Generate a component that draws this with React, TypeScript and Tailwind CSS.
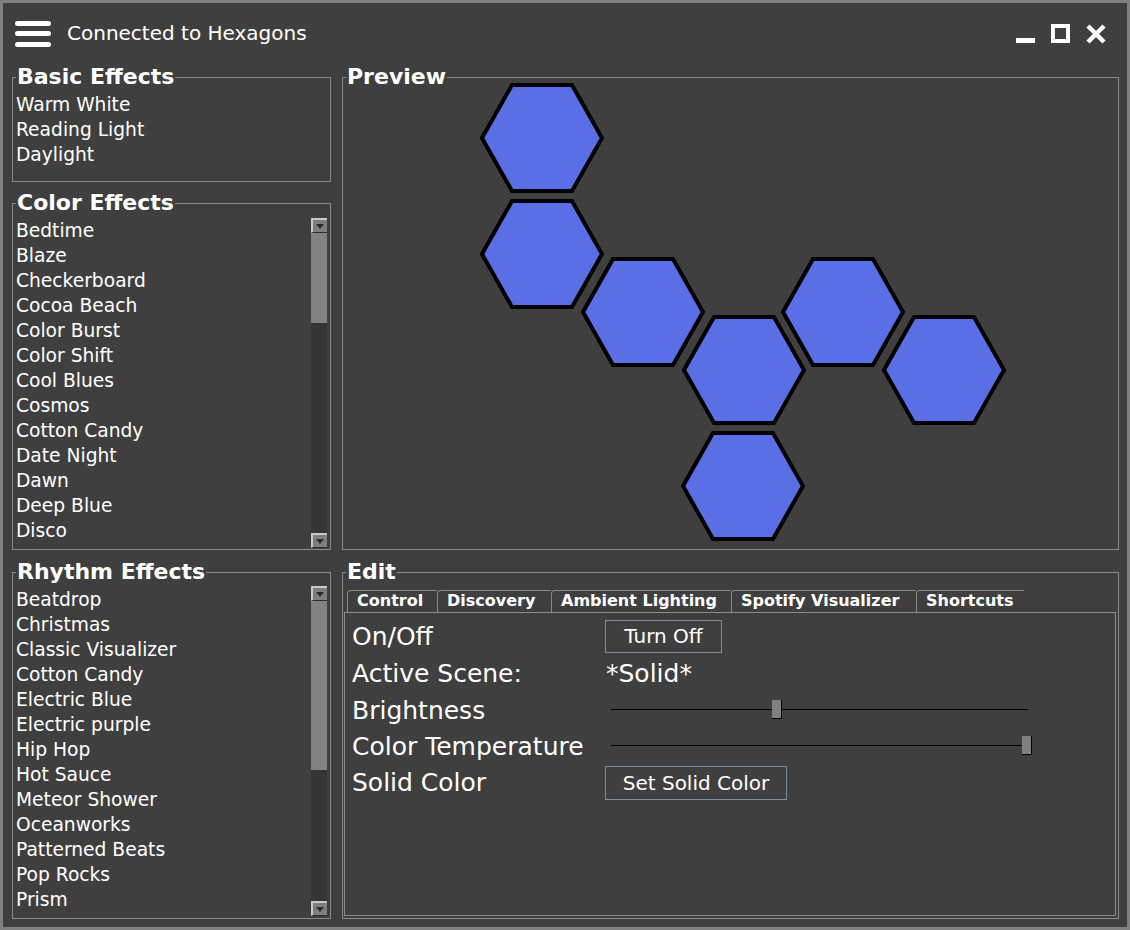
import React from "react";

const basicEffects = ["Warm White", "Reading Light", "Daylight"];
const colorEffects = [
  "Bedtime",
  "Blaze",
  "Checkerboard",
  "Cocoa Beach",
  "Color Burst",
  "Color Shift",
  "Cool Blues",
  "Cosmos",
  "Cotton Candy",
  "Date Night",
  "Dawn",
  "Deep Blue",
  "Disco",
];
const rhythmEffects = [
  "Beatdrop",
  "Christmas",
  "Classic Visualizer",
  "Cotton Candy",
  "Electric Blue",
  "Electric purple",
  "Hip Hop",
  "Hot Sauce",
  "Meteor Shower",
  "Oceanworks",
  "Patterned Beats",
  "Pop Rocks",
  "Prism",
];
const tabs = [
  { label: "Control", w: "w-[90px]" },
  { label: "Discovery", w: "w-[114px]" },
  { label: "Ambient Lighting", w: "w-[180px]" },
  { label: "Spotify Visualizer", w: "w-[185px]" },
  { label: "Shortcuts", w: "w-[108px]" },
];

// panel centres, relative to the preview canvas
const panels = [
  [199, 60],
  [199, 176],
  [300, 234],
  [401, 292],
  [500, 234],
  [601, 292],
  [400, 408],
];

const hexPoints = (cx: number, cy: number) => {
  const r = 60;
  const h = 53;
  return [
    [cx - r, cy],
    [cx - r / 2, cy - h],
    [cx + r / 2, cy - h],
    [cx + r, cy],
    [cx + r / 2, cy + h],
    [cx - r / 2, cy + h],
  ]
    .map((p) => p.join(","))
    .join(" ");
};

const Group = ({ title, className, children }: { title: string; className: string; children?: React.ReactNode }) => (
  <div className={`relative border border-[#8a8a8a] ${className}`}>
    <span className="absolute left-[3px] top-[-13px] bg-[#3f3f3f] px-[1px] text-[22px] font-bold leading-[24px] text-white">
      {title}
    </span>
    {children}
  </div>
);

const ArrowButton = () => (
  <div className="flex h-[15px] w-[16px] items-center justify-center border-t-2 border-l-2 border-b border-t-[#c8c8c8] border-l-[#c8c8c8] border-b-[#2e2e2e] bg-[#7f7f7f]">
    <svg width="8" height="5" viewBox="0 0 8 5">
      <path d="M0 0 H8 L4 5 Z" fill="#2b2b2b" />
    </svg>
  </div>
);

const Scrollbar = ({ spacer, thumb, className }: { spacer: string; thumb: string; className: string }) => (
  <div className={`flex w-[16px] shrink-0 flex-col bg-[#353535] ${className}`}>
    <ArrowButton />
    <div className="flex flex-1 flex-col">
      <div className={spacer} />
      <div className={`bg-[#828282] ${thumb}`} />
    </div>
    <ArrowButton />
  </div>
);

const ListBox = ({ items }: { items: string[] }) => (
  <div className="min-w-0 flex-1 overflow-hidden pl-[3px] pt-[14px]">
    {items.map((item) => (
      <div key={item} className="h-[25px] whitespace-nowrap text-[18.67px] leading-[25px]">
        {item}
      </div>
    ))}
  </div>
);

const Slider = ({ thumb }: { thumb: string }) => (
  <div className="relative ml-[6px] mt-[-3px] h-[1px] w-[417px] bg-black">
    <div className={`absolute h-[19px] w-[10px] border-r border-b border-black bg-[#808080] ${thumb}`} />
  </div>
);

export default function App() {
  return (
    <div className="h-[930px] w-[1130px] bg-[#808080] p-[3px] font-['DejaVu_Sans',sans-serif] text-white">
      <div className="flex h-full flex-col bg-[#3f3f3f]">
        {/* Title bar */}
        <div className="flex h-[62px] items-center pl-[12px] pr-[21px]">
          <svg width="36" height="26" viewBox="0 0 36 26">
            <rect x="0" y="0" width="36" height="5" rx="2.5" fill="#fff" />
            <rect x="0" y="10" width="36" height="5" rx="2.5" fill="#fff" />
            <rect x="0" y="21" width="36" height="5" rx="2.5" fill="#fff" />
          </svg>
          <span className="mb-[2px] ml-[16px] text-[20px] leading-[24px]">Connected to Hexagons</span>
          <svg className="ml-auto" width="90" height="20" viewBox="0 0 90 20">
            <rect x="0" y="14" width="19" height="5" fill="#fff" />
            <rect x="37" y="2" width="15" height="15" fill="none" stroke="#fff" strokeWidth="4" />
            <path d="M72 2 L88 18 M88 2 L72 18" stroke="#fff" strokeWidth="4.5" />
          </svg>
        </div>

        <div className="flex gap-[11px] pl-[9px] pt-[12px]">
          {/* Left column */}
          <div className="flex w-[319px] flex-col">
            <Group title="Basic Effects" className="h-[105px]">
              <ListBox items={basicEffects} />
            </Group>
            <Group title="Color Effects" className="mt-[21px] flex h-[347px]">
              <ListBox items={colorEffects} />
              <Scrollbar className="mb-[1px] mr-[3px] mt-[14px]" spacer="h-[0px]" thumb="h-[90px]" />
            </Group>
            <Group title="Rhythm Effects" className="mt-[22px] flex h-[347px]">
              <ListBox items={rhythmEffects} />
              <Scrollbar className="mb-[2px] mr-[3px] mt-[13px]" spacer="h-[0px]" thumb="h-[169px]" />
            </Group>
          </div>

          {/* Right column */}
          <div className="flex w-[777px] flex-col">
            <Group title="Preview" className="h-[473px]">
              <svg className="h-full w-full" viewBox="0 0 775 471">
                {panels.map(([x, y]) => (
                  <polygon key={`${x}-${y}`} points={hexPoints(x, y)} fill="#5a6fe6" stroke="#000" strokeWidth="4" strokeLinejoin="miter" />
                ))}
              </svg>
            </Group>
            <Group title="Edit" className="mt-[22px] flex h-[347px] flex-col">
              <div className="flex pl-[4px] pt-[17px]">
                {tabs.map((t) => (
                  <div
                    key={t.label}
                    className={`h-[22px] rounded-tl-[4px] border-t border-l border-[#8a8a8a] pl-[9px] text-[16px] font-bold leading-[20px] ${t.w}`}
                  >
                    {t.label}
                  </div>
                ))}
              </div>
              <div className="mb-[2px] ml-[1px] mr-[2px] flex-1 border border-[#8a8a8a] pl-[7px] pt-[6px]">
                <div className="grid grid-cols-[253px_1fr] text-[25px] leading-[30px]">
                  <div className="flex h-[36px] items-center">On/Off</div>
                  <div className="flex h-[36px] items-center">
                    <button className="mt-[-2px] h-[33px] w-[117px] border border-[#7e8c9c] text-[20px] leading-[24px] text-white">
                      Turn Off
                    </button>
                  </div>
                  <div className="flex h-[38px] items-center">Active Scene:</div>
                  <div className="flex h-[38px] items-center pl-[1px]">*Solid*</div>
                  <div className="flex h-[36px] items-center">Brightness</div>
                  <div className="flex h-[36px] items-center">
                    <Slider thumb="left-[161px] top-[-9px]" />
                  </div>
                  <div className="flex h-[36px] items-center">Color Temperature</div>
                  <div className="flex h-[36px] items-center">
                    <Slider thumb="left-[411px] top-[-9px]" />
                  </div>
                  <div className="flex h-[36px] items-center">Solid Color</div>
                  <div className="flex h-[36px] items-center">
                    <button className="h-[34px] w-[182px] border border-[#7e8c9c] text-[20px] leading-[24px] text-white">
                      Set Solid Color
                    </button>
                  </div>
                </div>
              </div>
            </Group>
          </div>
        </div>
      </div>
    </div>
  );
}
